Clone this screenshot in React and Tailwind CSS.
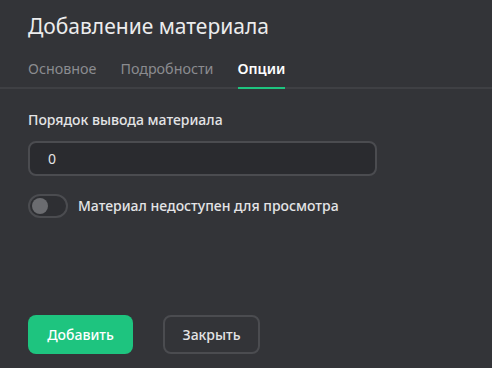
const TABS = ['Основное', 'Подробности', 'Опции'];

export default function App() {
  const active = 2;

  return (
    <div
      className="w-[492px] h-[368px] bg-[#333438] text-[#e6e6e8] flex flex-col"
      style={{ fontFamily: '"Noto Sans", "Open Sans", sans-serif' }}
    >
      {/* Header */}
      <h1 className="px-7 pt-[11px] text-[21px] leading-[30px] text-[#ececed]">Добавление материала</h1>

      {/* Tabs */}
      <div className="mt-[18px] border-b-2 border-[#3f4044] flex gap-6 px-7">
        {TABS.map((tab, i) => (
          <div
            key={tab}
            className={
              i === active
                ? 'text-[14.3px] leading-[20px] pb-[8px] font-semibold text-white border-b-2 border-[#1ec47f] -mb-[2px]'
                : 'text-[14.3px] leading-[20px] pb-[8px] text-[#8b8c90] -mb-[2px]'
            }
          >
            {tab}
          </div>
        ))}
      </div>

      {/* Body */}
      <div className="px-7 pt-[21px] flex flex-col">
        <label className="text-[14px] leading-[20px] font-medium text-[#e4e4e6]">Порядок вывода материала</label>
        <div className="mt-[11px] w-[349px] h-[35px] rounded-[8px] border-2 border-[#4b4c50] bg-[#2a2b2f] flex items-center px-[18px] text-[14px] text-[#e4e4e6]">
          0
        </div>
        <div className="mt-[18px] flex items-center gap-[10px]">
          <div className="w-[40px] h-[24px] rounded-full border-2 border-[#4b4c50] bg-[#2e2f33] flex items-center px-[2px]">
            <div className="w-[16px] h-[16px] rounded-full bg-[#6b6c70]" />
          </div>
          <span className="text-[14px] leading-[20px] font-medium text-[#e4e4e6]">Материал недоступен для просмотра</span>
        </div>
      </div>

      {/* Footer */}
      <div className="mt-auto px-7 pb-[14px] flex gap-[30px]">
        <button className="w-[105px] h-[39px] rounded-[8px] bg-[#1ec47f] text-white text-[14px] font-medium">
          Добавить
        </button>
        <button className="w-[97px] h-[39px] rounded-[8px] border-2 border-[#4b4c50] text-[#e4e4e6] text-[14px] font-medium">
          Закрыть
        </button>
      </div>
    </div>
  );
}
